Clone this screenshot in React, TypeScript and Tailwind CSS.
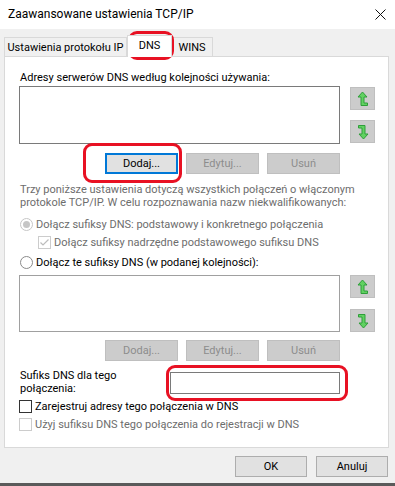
import React from "react"

const UpIcon = () => (
  <svg width="12" height="16" viewBox="0 0 12 16">
    <path d="M5.5 1 L10 6 L7 6 L7 12 L10.5 12 L10.5 14.5 L4 14.5 L4 6 L1 6 Z" fill="#61d161" stroke="#2f9e3a" strokeWidth="1" strokeLinejoin="round" />
  </svg>
)

const DownIcon = () => (
  <svg width="12" height="16" viewBox="0 0 12 16" className="rotate-180">
    <path d="M5.5 1 L10 6 L7 6 L7 12 L10.5 12 L10.5 14.5 L4 14.5 L4 6 L1 6 Z" fill="#61d161" stroke="#2f9e3a" strokeWidth="1" strokeLinejoin="round" />
  </svg>
)

const ArrowBtn = ({ children }: { children: React.ReactNode }) => (
  <div className="w-[25px] h-[23px] bg-[#cccccc] border border-[#bfbfbf] flex items-center justify-center">
    {children}
  </div>
)

const Btn = ({ label, disabled, focused }: { label: string; disabled?: boolean; focused?: boolean }) => (
  <div
    className={`w-[73px] h-[21px] flex items-center justify-center ${
      disabled
        ? "bg-[#cccccc] border border-[#bfbfbf] text-[#8c8c8c]"
        : focused
        ? "bg-[#e1e1e1] border-2 border-[#0078d7] text-black"
        : "bg-[#e1e1e1] border border-[#adadad] text-black"
    }`}
  >
    {label}
  </div>
)

const Radio = ({ checked, disabled }: { checked?: boolean; disabled?: boolean }) => (
  <svg width="13" height="13" viewBox="0 0 13 13" className="shrink-0">
    <circle cx="6.5" cy="6.5" r="6" fill="#ffffff" stroke={disabled ? "#c6c6c6" : "#8a8a8a"} strokeWidth="1" />
    {checked && <circle cx="6.5" cy="6.5" r="3.5" fill="#c6c6c6" />}
  </svg>
)

const Check = ({ checked, disabled }: { checked?: boolean; disabled?: boolean }) => (
  <svg width="13" height="13" viewBox="0 0 13 13" className="shrink-0">
    <rect x="0.5" y="0.5" width="12" height="12" fill="#ffffff" stroke={disabled ? "#cccccc" : "#333333"} strokeWidth="1" />
    {checked && <path d="M2.5 6.5 L5 9 L10.5 3.5" fill="none" stroke="#bcbcbc" strokeWidth="1.2" />}
  </svg>
)

const Highlight = ({ className }: { className: string }) => (
  <div className={`absolute border-[3px] border-[#e81123] rounded-[9px] pointer-events-none ${className}`} />
)

const App = () => {
  return (
    <div className="relative w-[395px] h-[486px] bg-[#f0f0f0] overflow-hidden flex flex-col text-[11px] leading-[15px] text-black whitespace-nowrap font-['Roboto','Liberation_Sans',Arial,sans-serif]">
      {/* title bar */}
      <div className="h-[29px] bg-white flex items-center justify-between pl-[8px] pr-[9px] shrink-0">
        <span className="text-[12px]">Zaawansowane ustawienia TCP/IP</span>
        <svg width="11" height="11" viewBox="0 0 11 11">
          <path d="M0.5 0.5 L10.5 10.5 M10.5 0.5 L0.5 10.5" stroke="#111" strokeWidth="1" />
        </svg>
      </div>

      {/* tabs */}
      <div className="h-[27px] flex items-end pl-[4px] shrink-0">
        <div className="h-[19px] w-[123px] justify-center bg-[#f0f0f0] border border-b-0 border-[#d9d9d9] flex items-center">
          Ustawienia protokołu IP
        </div>
        <div className="h-[22px] w-[45px] justify-center bg-white border border-b-0 border-[#d9d9d9] -mb-px relative z-10 flex items-center pb-[2px]">
          DNS
        </div>
        <div className="h-[19px] w-[41px] justify-center bg-[#f0f0f0] border border-b-0 border-l-0 border-[#d9d9d9] flex items-center">
          WINS
        </div>
      </div>

      {/* panel */}
      <div className="ml-[4px] w-[385px] h-[392px] bg-white border border-[#d9d9d9] pl-[14px] pt-[13px] flex flex-col shrink-0">
        <div className="pl-[1px]">Adresy serwerów DNS według kolejności używania:</div>
        <div className="flex gap-[10px] mt-[1px]">
          <div className="w-[321px] h-[58px] border border-[#7a7a7a] bg-white" />
          <div className="flex flex-col justify-between py-[1px]">
            <ArrowBtn><UpIcon /></ArrowBtn>
            <ArrowBtn><DownIcon /></ArrowBtn>
          </div>
        </div>
        <div className="w-[321px] flex justify-end gap-[8px] mt-[9px]">
          <Btn label="Dodaj..." focused />
          <Btn label="Edytuj..." disabled />
          <Btn label="Usuń" disabled />
        </div>

        <div className="mt-[9px] pl-[1px] text-[#6d6d6d] leading-[13px]">
          <div>Trzy poniższe ustawienia dotyczą wszystkich połączeń o włączonym</div>
          <div>protokole TCP/IP. W celu rozpoznawania nazw niekwalifikowanych:</div>
        </div>

        <div className="mt-[7px] h-[16px] flex items-center gap-[3px] pl-[1px] text-[#6d6d6d]">
          <Radio checked disabled />
          <span>Dołącz sufiksy DNS: podstawowy i konkretnego połączenia</span>
        </div>
        <div className="mt-[2px] h-[16px] flex items-center gap-[3px] pl-[19px] text-[#6d6d6d]">
          <Check checked disabled />
          <span>Dołącz sufiksy nadrzędne podstawowego sufiksu DNS</span>
        </div>
        <div className="mt-[4px] h-[16px] flex items-center gap-[3px] pl-[1px]">
          <Radio />
          <span>Dołącz te sufiksy DNS (w podanej kolejności):</span>
        </div>

        <div className="flex gap-[10px] mt-[5px]">
          <div className="w-[321px] h-[57px] border border-[#a0a0a0] bg-white" />
          <div className="flex flex-col justify-between">
            <ArrowBtn><UpIcon /></ArrowBtn>
            <ArrowBtn><DownIcon /></ArrowBtn>
          </div>
        </div>
        <div className="w-[321px] flex justify-end gap-[8px] mt-[8px]">
          <Btn label="Dodaj..." disabled />
          <Btn label="Edytuj..." disabled />
          <Btn label="Usuń" disabled />
        </div>

        <div className="flex mt-[8px]">
          <div className="w-[151px] pl-[1px] leading-[13px]">
            <div>Sufiks DNS dla tego</div>
            <div>połączenia:</div>
          </div>
          <div className="w-[170px] h-[22px] mt-[3px] border border-[#7a7a7a] bg-white" />
        </div>

        <div className="mt-[4px] h-[15px] flex items-center gap-[3px]">
          <Check />
          <span>Zarejestruj adresy tego połączenia w DNS</span>
        </div>
        <div className="mt-[3px] h-[15px] flex items-center gap-[3px] text-[#6d6d6d]">
          <Check disabled />
          <span>Użyj sufiksu DNS tego połączenia do rejestracji w DNS</span>
        </div>
      </div>

      {/* dialog buttons */}
      <div className="flex justify-end gap-[9px] pr-[7px] mt-[8px]">
        <div className="w-[72px] h-[21px] bg-[#e1e1e1] border border-[#adadad] flex items-center justify-center">OK</div>
        <div className="w-[72px] h-[21px] bg-[#e1e1e1] border border-[#adadad] flex items-center justify-center">Anuluj</div>
      </div>

      <div className="mt-auto h-[3px] bg-[#5a5a5a] shrink-0" />

      {/* red annotation marks */}
      <Highlight className="left-[128px] top-[31px] w-[46px] h-[29px]" />
      <Highlight className="left-[83px] top-[143px] w-[99px] h-[40px]" />
      <Highlight className="left-[166px] top-[365px] w-[182px] h-[36px]" />
    </div>
  )
}

export default App
